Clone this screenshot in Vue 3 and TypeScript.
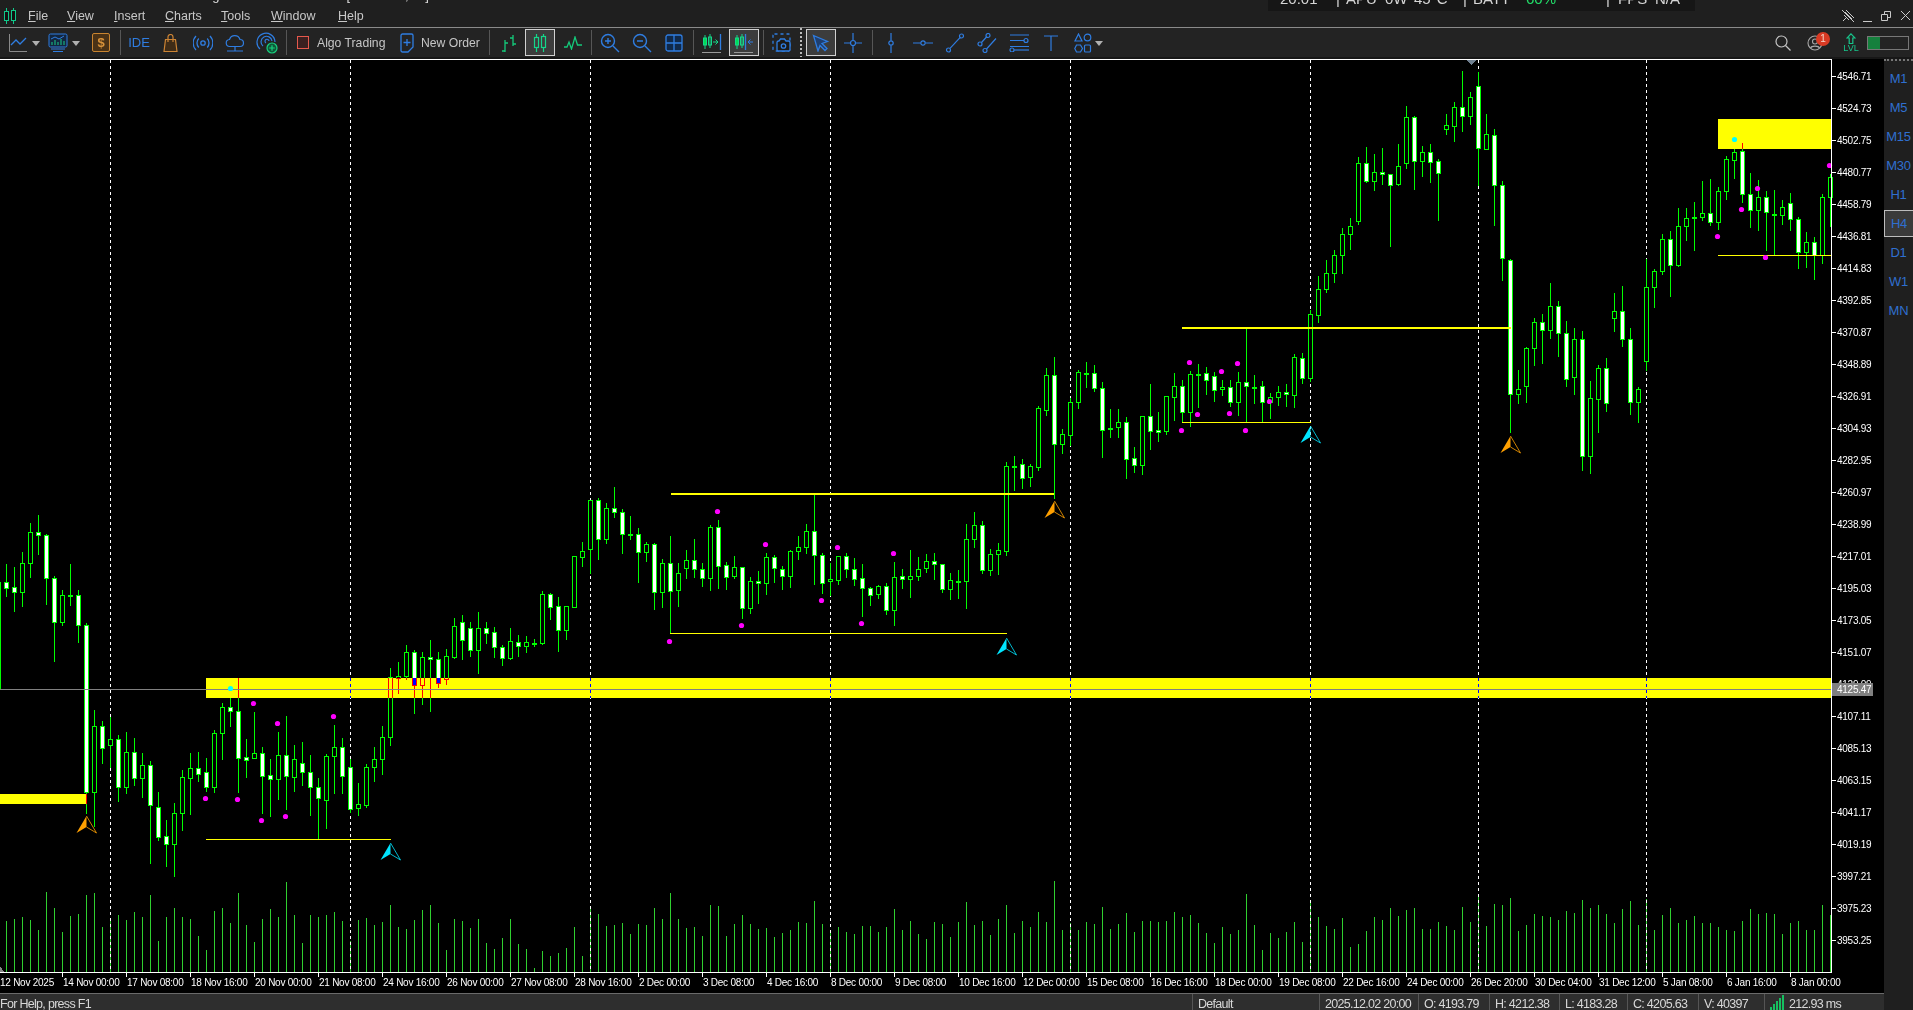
<template>
  <div class="terminal">
    <header class="titlebar">
      <div class="title-bits">
        <span class="tb-a">Trading</span><span class="tb-b">[GOLDm#,H4]</span>
      </div>
      <div class="menubar">
        <svg class="app-logo" width="14" height="18" viewBox="0 0 14 18">
          <path d="M3.5 1v16M10.5 1v16" stroke="#10c98a" fill="none" />
          <rect x="1.5" y="4.5" width="4" height="9" fill="#111" stroke="#10c98a" />
          <rect x="8.5" y="3.5" width="4" height="10" fill="#111" stroke="#10c98a" />
        </svg>
        <nav class="menu">
          <span class="m-file"><u>F</u>ile</span>
          <span class="m-view"><u>V</u>iew</span>
          <span class="m-insert"><u>I</u>nsert</span>
          <span class="m-charts"><u>C</u>harts</span>
          <span class="m-tools"><u>T</u>ools</span>
          <span class="m-window"><u>W</u>indow</span>
          <span class="m-help"><u>H</u>elp</span>
        </nav>
        <div class="winbtns">
          <svg width="14" height="14" viewBox="0 0 14 14" fill="none" stroke="#c9c9c9">
            <path d="M5 1l8 8M4 3l7 7M2 12l4-4M3 6l5 5M1 1l12 12" />
          </svg>
          <svg width="10" height="14" viewBox="0 0 10 14" fill="none" stroke="#c9c9c9">
            <path d="M0 12.5h9" />
          </svg>
          <svg width="11" height="14" viewBox="0 0 11 14" fill="none" stroke="#c9c9c9">
            <path d="M0.5 5.5h6v6h-6zM3.5 5V2.5h6v6H7" />
          </svg>
          <svg width="11" height="14" viewBox="0 0 11 14" fill="none" stroke="#c9c9c9">
            <path d="M1 2l9 9M10 2l-9 9" />
          </svg>
        </div>
      </div>
      <div class="hud">
        <span v-for="(h, i) in hud" :key="i" :class="{ good: h.good }" :style="{ width: h.w + 'px' }">{{ h.t }}</span>
      </div>
    </header>

    <div class="toolbar">
      <span class="slot i-line">
        <svg width="20" height="20" viewBox="0 0 20 20" fill="none">
          <path d="M1.5 1v17.5H19" stroke="#8a8a8a" />
          <path d="M3 12l5-5 4 4 6-6" stroke="#2f7de1" stroke-width="1.3" />
        </svg>
      </span>
      <span class="caret c-1"></span>
      <span class="slot i-monitor">
        <svg width="20" height="20" viewBox="0 0 20 20" fill="none" stroke="#2f7de1">
          <rect x="1" y="1" width="18" height="13" rx="1.5" fill="#13263f" />
          <path d="M4 12V9M7 12V7M10 12V9M13 12V6M16 12V8" stroke="#18c98a" />
          <path d="M3 6l4-2 4 2 5-3" />
          <path d="M3 16h14M5 18.5h10" />
        </svg>
      </span>
      <span class="caret c-2"></span>
      <span class="slot i-dollar"><span class="dollar">$</span></span>
      <span class="sep s-1"></span>

      <span class="slot w32 ide">IDE</span>
      <span class="slot w32">
        <svg width="18" height="18" viewBox="0 0 18 18" fill="none" stroke="#cc8434" stroke-width="1.2">
          <path d="M3.5 5.5h10l1.5 12H2z" fill="#3f2c17" />
          <path d="M6 8V3a2.5 2.5 0 0 1 5 0v5" />
        </svg>
      </span>
      <span class="slot w32">
        <svg width="20" height="16" viewBox="0 0 20 16" fill="none" stroke="#2f7de1" stroke-width="1.3">
          <circle cx="10" cy="8" r="2.2" />
          <path d="M5.8 3.5a6.5 6.5 0 0 0 0 9M14.2 3.5a6.5 6.5 0 0 1 0 9M3 1a10 10 0 0 0 0 14M17 1a10 10 0 0 1 0 14" />
        </svg>
      </span>
      <span class="slot w32">
        <svg width="20" height="20" viewBox="0 0 20 20" fill="none" stroke="#2f7de1" stroke-width="1.2">
          <path d="M5 13.5a3.5 3.5 0 0 1-.5-7A5.5 5.5 0 0 1 15 6.5a3.5 3.5 0 0 1 0 7z" />
          <path d="M10 13.5v4M2 18h16" />
        </svg>
      </span>
      <span class="slot w32">
        <svg width="22" height="22" viewBox="0 0 22 22" fill="none" stroke="#2f7de1" stroke-width="1.2">
          <path d="M4 17a9 9 0 1 1 15-7M7 14a5.5 5.5 0 1 1 9-5M10 11a2 2 0 1 1 3-2" />
          <circle cx="16" cy="16" r="5" fill="#0e5a3a" stroke="#19d07f" />
          <path d="M16 13.2v5.6M13.2 16h5.6" stroke="#19d07f" />
        </svg>
      </span>
      <span class="sep s-2"></span>

      <span class="algo-box"></span>
      <span class="tb-text algo">Algo Trading</span>
      <span class="order-ic">
        <svg width="14" height="20" viewBox="0 0 14 20" fill="none" stroke="#2f7de1" stroke-width="1.3">
          <path d="M2.5 1h9a1.5 1.5 0 0 1 1.5 1.5V14l-5 5H2.5A1.5 1.5 0 0 1 1 17.5v-15A1.5 1.5 0 0 1 2.5 1z" />
          <path d="M7 6v7M3.5 9.5h7" />
        </svg>
      </span>
      <span class="tb-text order">New Order</span>
      <span class="sep s-3"></span>

      <span class="slot w32 m3">
        <svg width="18" height="18" viewBox="0 0 18 18" fill="none" stroke="#14c97a" stroke-width="1.3">
          <path d="M5 6v12M2 17h3M5 9h3M13 1v11M10 4h3M13 10h3" />
        </svg>
      </span>
      <span class="slot active w30">
        <svg width="14" height="20" viewBox="0 0 14 20" fill="none" stroke="#14d78a" stroke-width="1.2">
          <path d="M3.5 1v18M10.5 1v18" />
          <rect x="1.5" y="4.5" width="4" height="10" fill="#3c3c3c" />
          <rect x="8.5" y="3.5" width="4" height="11" fill="#3c3c3c" />
        </svg>
      </span>
      <span class="slot w32 m2">
        <svg width="18" height="14" viewBox="0 0 18 14" fill="none" stroke="#14c97a" stroke-width="1.3">
          <path d="M0 11h3l2-5 2.5 7L11 1l2.5 8H18" />
        </svg>
      </span>
      <span class="sep s-4"></span>

      <span class="slot w32 m2">
        <svg width="20" height="20" viewBox="0 0 20 20" fill="none" stroke="#2f7de1" stroke-width="1.4">
          <circle cx="8" cy="8" r="6.5" />
          <path d="M8 5v6M5 8h6M13 13l6 6" />
        </svg>
      </span>
      <span class="slot w32">
        <svg width="20" height="20" viewBox="0 0 20 20" fill="none" stroke="#2f7de1" stroke-width="1.4">
          <circle cx="8" cy="8" r="6.5" />
          <path d="M5 8h6M13 13l6 6" />
        </svg>
      </span>
      <span class="slot w32">
        <svg width="18" height="18" viewBox="0 0 18 18" fill="#10294a" stroke="#2f7de1" stroke-width="1.3">
          <rect x="1" y="1" width="16" height="16" rx="2" />
          <path d="M9 1v16M1 9h16" />
        </svg>
      </span>
      <span class="sep s-5"></span>

      <span class="slot w32 m2">
        <svg width="20" height="20" viewBox="0 0 20 20" fill="none">
          <path d="M3 2v14M8 1v14" stroke="#14d78a" />
          <rect x="1.5" y="5" width="3" height="7" fill="#0d5" stroke="#14d78a" />
          <rect x="6.5" y="4" width="3" height="8" stroke="#14d78a" />
          <path d="M11 9h5M13.5 6.5L16 9l-2.5 2.5" stroke="#14d78a" />
          <path d="M18.5 1v16" stroke="#2f7de1" stroke-width="1.3" />
          <path d="M0 19.5h19" stroke="#9a9a9a" />
        </svg>
      </span>
      <span class="slot active w30 m1">
        <svg width="20" height="20" viewBox="0 0 20 20" fill="none">
          <path d="M3 2v14M8 1v14" stroke="#14d78a" />
          <rect x="1.5" y="5" width="3" height="7" fill="#0d5" stroke="#14d78a" />
          <rect x="6.5" y="4" width="3" height="8" stroke="#14d78a" />
          <path d="M11.5 1v16" stroke="#2f7de1" stroke-width="1.3" />
          <path d="M19 9h-5M16.5 6.5L14 9l2.5 2.5" stroke="#2f7de1" />
          <path d="M0 19.5h19" stroke="#9a9a9a" />
        </svg>
      </span>
      <span class="sep s-6"></span>

      <span class="slot w32 m2">
        <svg width="20" height="20" viewBox="0 0 20 20" fill="none" stroke="#2f7de1" stroke-width="1.3">
          <rect x="1" y="1" width="17" height="17" rx="1.5" stroke-dasharray="3 3" />
          <path d="M7 8l1.5-2h4L14 8h2.5a1.5 1.5 0 0 1 1.5 1.5v7a1.5 1.5 0 0 1-1.5 1.5h-10A1.5 1.5 0 0 1 5 16.5v-7A1.5 1.5 0 0 1 6.5 8z" fill="#1a1a1a" />
          <circle cx="11.5" cy="13" r="2.2" />
        </svg>
      </span>
      <span class="dots"></span>
      <span class="slot active w30 m4">
        <svg width="18" height="18" viewBox="0 0 18 18" fill="#1f3f70" stroke="#2f7de1" stroke-width="1.3">
          <path d="M1.5 1.5l14 6-5.5 2 5 5-2 2-5-5-2 5.5z" />
        </svg>
      </span>
      <span class="slot w32 m1">
        <svg width="18" height="20" viewBox="0 0 18 20" fill="none" stroke="#2f7de1" stroke-width="1.2">
          <path d="M9 0v7M9 13v7M0 10h6M12 10h6" />
          <circle cx="9" cy="10" r="2.5" />
        </svg>
      </span>
      <span class="sep s-7"></span>

      <span class="slot w32 m2">
        <svg width="8" height="20" viewBox="0 0 8 20" fill="none" stroke="#2f7de1" stroke-width="1.2">
          <path d="M4 0v7.500M4 12.500v7.500" />
          <circle cx="4" cy="10" r="2.200" />
        </svg>
      </span>
      <span class="slot w32">
        <svg width="20" height="8" viewBox="0 0 20 8" fill="none" stroke="#2f7de1" stroke-width="1.2">
          <path d="M0 4h7.500M12.500 4h7.500" />
          <circle cx="10" cy="4" r="2.200" />
        </svg>
      </span>
      <span class="slot w32">
        <svg width="20" height="20" viewBox="0 0 20 20" fill="none" stroke="#2f7de1" stroke-width="1.2">
          <circle cx="3.500" cy="17" r="2" />
          <circle cx="16.500" cy="3" r="2" />
          <path d="M5 15.300L15 4.700" />
        </svg>
      </span>
      <span class="slot w32">
        <svg width="20" height="20" viewBox="0 0 20 20" fill="none" stroke="#2f7de1" stroke-width="1.2">
          <circle cx="3" cy="11" r="2" />
          <circle cx="11" cy="2.500" r="2" />
          <circle cx="8" cy="17.500" r="2" />
          <path d="M4.500 9.500L9.500 4M9.500 16L19 5.500" />
        </svg>
      </span>
      <span class="slot w32">
        <svg width="20" height="18" viewBox="0 0 20 18" fill="none" stroke="#2f7de1" stroke-width="1.2">
          <path d="M1 1h19M1 6.500h14M1 12.500h19" />
          <circle cx="17" cy="6.500" r="2" />
          <circle cx="3" cy="16" r="2" />
          <path d="M5 16h15" />
        </svg>
      </span>
      <span class="slot w32">
        <svg width="14" height="16" viewBox="0 0 14 16" fill="none" stroke="#2f7de1" stroke-width="1.2">
          <path d="M0 1h14M7 1v15" />
        </svg>
      </span>
      <span class="slot i-shapes">
        <svg width="18" height="20" viewBox="0 0 18 20" fill="none" stroke="#2f7de1" stroke-width="1.2">
          <path d="M4.500 1L8 8H1z" />
          <circle cx="13.500" cy="4.500" r="3.300" />
          <path d="M2.500 12h4l2 3.500-2 3.500h-4L.800 15.500z" />
          <rect x="10.500" y="12" width="6" height="7" rx="1" />
        </svg>
      </span>
      <span class="caret c-3"></span>

      <div class="toolbar-right">
        <span class="slot w32">
          <svg width="16" height="16" viewBox="0 0 16 16" fill="none" stroke="#c4c4c4" stroke-width="1.2">
            <circle cx="6.500" cy="6.500" r="5.500" />
            <path d="M10.500 10.500l5 5" />
          </svg>
        </span>
        <span class="slot w32 user">
          <svg width="16" height="16" viewBox="0 0 16 16" fill="none" stroke="#a8a8a8" stroke-width="1.1">
            <circle cx="8" cy="8" r="7" />
            <circle cx="8" cy="6.500" r="2.500" />
            <path d="M3.500 13c1-2.500 8-2.500 9 0" />
          </svg>
          <b class="badge">1</b>
        </span>
        <span class="lvl">
          <svg width="10" height="11" viewBox="0 0 10 11" fill="none" stroke="#17c48a" stroke-width="1.2">
            <path d="M5 .8L9 5H6.800v5.500H3.200V5H1z" />
          </svg>
          <em>LVL</em>
        </span>
        <span class="gauge"><i></i></span>
      </div>
    </div>

    <div class="workspace">
      <div class="main-col">
        <svg class="chart" width="1884" height="934" viewBox="0 59 1884 934">
          <rect class="crisp" x="0" y="59" width="1884" height="934" fill="#000" />

          <rect v-for="v in volumes" :key="'v' + v.x" class="crisp" :x="v.x" :y="v.y" width="1" :height="972 - v.y" fill="#2fd02f" />
          <path class="crisp" d="M0 972V966L4 972Z" fill="#888" />

          <line v-for="x in gridX" :key="'g' + x" class="crisp" :x1="x + 0.5" :x2="x + 0.5" y1="60" y2="972" stroke="#fff" stroke-dasharray="3 3" />

          <g v-for="c in bars" :key="c.x">
            <rect class="crisp" :x="c.x" :y="c.hi" width="1" :height="c.lo - c.hi + 1" fill="#00ff00" />
            <rect class="crisp" :x="c.x - 2" :y="c.top" width="5" :height="c.bot - c.top + 1" fill="#00ff00" />
            <rect v-if="c.bot - c.top > 1" class="crisp" :x="c.x - 1" :y="c.top + 1" width="3" :height="c.bot - c.top - 1" :fill="c.white ? '#fff' : '#000'" />
          </g>

          <rect class="crisp band" x="206" y="678" width="1625" height="20" fill="#ffff00" />
          <rect class="crisp band" x="0" y="794" width="87" height="10" fill="#ffff00" />
          <rect class="crisp band" x="1718" y="119" width="113" height="30" fill="#ffff00" />

          <rect class="crisp" x="0" y="689" width="1831" height="1" fill="#808080" />

          <rect v-for="(l, i) in levels" :key="'l' + i" class="crisp" :x="l[0]" :y="l[1]" :width="l[2] - l[0]" :height="l[3]" fill="#ffff00" />

          <circle v-for="(d, i) in magenta" :key="'m' + i" :cx="d[0] + 0.5" :cy="d[1] + 0.5" r="2.600" fill="#ff00ff" />
          <circle cx="230.500" cy="688.500" r="2.600" fill="#00ffff" />
          <circle cx="1734.500" cy="139.500" r="2.600" fill="#00ffff" />

          <g v-for="(a, i) in arrows" :key="'a' + i" :transform="`translate(${a.x + 0.5} ${a.y})`">
            <path d="M0 0L-10 17L0 11Z" :fill="a.color" />
            <path d="M0 0L10 17L0 11" fill="none" :stroke="a.color" stroke-width="1" opacity="0.8" />
          </g>

          <path class="crisp" d="M1466 60H1476L1471 65Z" fill="#708090" />

          <rect class="crisp" x="0" y="59" width="1832" height="1" fill="#fff" />
          <rect class="crisp" x="1831" y="59" width="1" height="914" fill="#fff" />
          <rect class="crisp" x="0" y="972" width="1832" height="1" fill="#fff" />

          <g v-for="p in prices" :key="p.t">
            <rect class="crisp" x="1832" :y="p.y" width="4" height="1" fill="#fff" />
            <text class="axis" x="1837" :y="p.y + 4">{{ p.t }}</text>
          </g>
          <rect class="crisp" x="1832" y="683" width="41" height="13" fill="#808080" />
          <text class="axis" x="1837" y="693">4125.47</text>

          <g v-for="(t, i) in times" :key="t">
            <rect class="crisp" :x="62 + 64 * (i - 1)" y="972" width="1" height="5" fill="#fff" />
            <text class="axis" :x="i === 0 ? 0 : 63 + 64 * (i - 1)" y="986">{{ t }}</text>
          </g>
        </svg>

        <footer class="statusbar">
          <span v-for="(s, i) in statusCells" :key="i" class="cell" :style="{ width: s.w + 'px' }">{{ s.t }}</span>
          <span class="cell ping">
            <svg width="14" height="16" viewBox="0 0 14 16" fill="#16c060">
              <rect x="0" y="13" width="2" height="3" />
              <rect x="3" y="10" width="2" height="6" />
              <rect x="6" y="7" width="2" height="9" />
              <rect x="9" y="4" width="2" height="12" />
              <rect x="12" y="1" width="2" height="15" />
            </svg>
            212.93 ms
          </span>
        </footer>
      </div>

      <aside class="timeframes">
        <span v-for="tf in frames" :key="tf" class="tf" :class="{ on: tf === 'H4' }">{{ tf }}</span>
      </aside>
    </div>
  </div>
</template>

<script setup lang="ts">
import { computed } from "vue";

// hi, body top, body bottom, lo, white body - in page pixels, one entry per H4 bar, first bar sits at x = -2
const raw: number[][] = [
  [582,582,688,688,0],[564,582,588,596,1],[567,587,592,611,1],[552,563,592,606,0],[523,532,563,577,0],[515,532,535,554,1],[534,535,578,604,1],[576,578,622,661,1],
  [590,595,622,625,0],[564,595,596,605,0],[590,595,625,642,1],[623,625,792,813,1],[710,726,792,826,0],[721,726,748,763,1],[717,739,745,767,0],[735,739,787,801,1],
  [732,752,787,793,0],[738,752,778,785,1],[753,765,778,797,0],[761,765,805,863,1],[792,807,837,840,1],[820,836,844,866,1],[803,813,844,876,0],[770,777,813,830,0],
  [753,768,778,814,0],[752,768,774,781,1],[758,772,787,791,1],[730,733,787,792,0],[703,707,733,759,0],[698,707,711,726,1],[678,711,758,792,1],[739,757,760,777,1],
  [712,753,758,758,0],[747,753,776,813,1],[759,775,779,816,1],[732,755,779,799,0],[716,755,776,809,1],[745,759,777,791,0],[742,763,772,785,1],[755,772,787,815,1],
  [778,787,798,839,1],[754,756,800,828,0],[725,747,756,793,0],[738,747,776,793,1],[759,767,809,812,1],[783,804,808,815,0],[764,767,805,807,0],[747,759,767,781,0],
  [726,737,759,774,0],[668,677,737,745,0],[662,676,678,693,0],[645,652,676,679,0],[650,652,685,713,1],[652,657,685,704,0],[640,657,659,711,1],[652,659,683,687,1],
  [649,656,679,684,0],[618,626,657,658,0],[615,622,640,659,1],[622,628,650,656,1],[612,628,650,673,0],[622,628,633,643,1],[627,632,647,657,1],[645,647,658,665,1],
  [628,641,658,659,0],[635,642,646,656,1],[636,642,646,652,0],[639,643,644,646,0],[591,594,643,644,0],[593,594,607,619,1],[597,606,630,651,1],[606,606,630,639,0],
  [556,556,607,607,0],[542,551,557,566,0],[500,500,549,573,0],[498,500,539,559,1],[503,508,539,543,0],[487,508,512,517,1],[509,512,534,553,1],[516,534,535,539,0],
  [528,534,552,582,1],[542,544,552,561,0],[543,544,592,609,1],[559,563,592,607,0],[536,563,591,633,1],[563,573,590,606,0],[550,560,568,578,0],[539,560,569,577,1],
  [563,569,578,586,1],[525,527,578,590,0],[520,527,566,588,1],[562,565,577,589,1],[556,567,576,578,0],[567,567,608,618,1],[577,581,608,613,0],[571,581,583,603,1],
  [553,557,583,594,0],[555,557,568,582,1],[566,569,576,589,1],[550,551,576,587,0],[536,547,551,559,0],[524,531,547,553,0],[495,531,555,584,1],[553,555,583,593,1],
  [563,579,581,595,0],[556,556,580,584,0],[553,556,569,577,1],[558,569,579,585,1],[564,578,588,616,1],[587,588,595,605,1],[585,586,594,598,0],[583,586,610,614,1],
  [562,577,610,625,0],[569,576,579,588,1],[550,576,579,597,0],[557,569,576,580,0],[554,561,568,572,0],[553,561,564,579,1],[564,564,589,592,1],[573,580,589,599,0],
  [570,581,582,598,0],[524,539,581,608,0],[512,525,539,547,0],[521,525,570,573,1],[549,554,570,575,0],[543,550,554,574,0],[462,466,551,555,0],[456,466,467,490,0],
  [459,464,478,488,1],[464,466,477,486,0],[406,408,467,470,0],[368,375,410,415,0],[357,375,444,498,1],[429,434,444,453,0],[398,402,435,445,0],[370,372,402,408,0],
  [362,373,374,387,0],[365,373,388,391,1],[382,388,430,457,1],[409,428,429,437,0],[409,422,427,437,0],[417,422,459,478,1],[447,458,465,472,1],[416,416,465,474,0],
  [384,416,431,449,1],[412,430,432,441,1],[396,396,431,434,0],[373,386,397,420,0],[380,386,412,422,1],[371,374,412,426,0],[364,374,375,407,0],[367,373,380,394,1],
  [372,376,390,401,1],[380,387,389,395,0],[380,387,402,406,1],[372,382,402,415,0],[327,382,386,422,1],[375,387,388,403,0],[381,386,402,422,1],[393,397,402,418,0],
  [386,392,397,405,0],[384,392,394,406,1],[354,357,395,407,0],[353,358,378,383,1],[310,314,378,381,0],[276,289,315,322,0],[260,273,289,292,0],[250,255,273,282,0],
  [228,234,255,273,0],[218,226,234,249,0],[157,163,221,224,0],[147,163,181,182,1],[154,172,181,190,0],[148,172,174,184,1],[174,174,185,246,1],[144,166,184,185,0],
  [106,117,163,168,0],[116,117,161,189,1],[146,152,161,176,0],[144,152,162,182,1],[159,161,173,220,1],[114,125,129,134,0],[102,107,126,141,0],[71,107,116,131,1],
  [92,97,116,124,0],[72,86,148,185,1],[114,134,149,149,0],[129,135,185,225,1],[181,185,258,280,1],[259,260,394,432,1],[370,389,394,403,0],[347,348,386,402,0],
  [318,322,348,365,0],[314,322,330,363,1],[283,306,330,338,0],[301,306,333,356,1],[321,333,379,386,1],[328,339,377,394,0],[331,339,456,470,1],[381,398,456,473,0],
  [365,368,399,432,0],[358,368,403,411,1],[293,311,318,331,0],[286,311,339,346,1],[328,339,402,414,1],[387,389,402,422,0],[259,287,361,370,0],[269,271,287,307,0],
  [234,239,271,274,0],[231,239,265,296,1],[208,226,265,266,0],[208,218,226,240,0],[202,217,218,250,0],[181,213,217,220,0],[179,213,222,225,1],[187,191,222,229,0],
  [156,159,191,199,0],[149,152,160,178,0],[143,151,194,202,1],[173,194,210,227,1],[180,197,210,230,0],[191,197,212,250,1],[190,214,215,255,0],[200,207,215,224,0],
  [193,203,219,230,1],[217,219,252,268,1],[232,242,252,267,0],[237,242,255,279,1],[194,197,255,263,0],[174,177,197,226,0],
];

const bars = computed(() =>
  raw.map((r, i) => ({
    x: -2 + 8 * i,
    hi: r[0],
    top: r[1],
    bot: r[2],
    lo: r[3],
    white: r[4] === 1,
  }))
);

// volume tops that could be read off the reference, everything else follows the bar range
const knownVol: Record<number, number> = {
  46: 892, 94: 893, 158: 941, 206: 950, 238: 893, 254: 942, 286: 882, 302: 943, 350: 941, 446: 950, 486: 943, 494: 949,
  518: 944, 526: 949, 534: 968, 542: 951, 550: 956, 558: 953, 566: 948, 582: 956, 1054: 881, 1214: 943, 1262: 950, 1302: 942, 1350: 947, 1358: 944,
};

const volumes = computed(() =>
  bars.value.map((b, i) => {
    const noise = (i * 37 + (i % 7) * 11) % 17;
    const h = 24 + Math.min((b.lo - b.hi) * 0.42, 44) + noise;
    return { x: b.x, y: knownVol[b.x] ?? Math.round(972 - h) };
  })
);

const gridX = [110, 350, 590, 830, 1070, 1310, 1478, 1646];

// x1, y, x2, height
const levels = [
  [206, 839, 391, 1],
  [671, 493, 1054, 2],
  [670, 633, 1007, 1],
  [1182, 422, 1311, 1],
  [1182, 327, 1511, 2],
  [1718, 255, 1831, 1],
];

const magenta = [
  [205, 798], [237, 799], [261, 820], [285, 816], [253, 703], [277, 723], [333, 716],
  [717, 511], [765, 544], [837, 547], [893, 553], [821, 600], [741, 625], [861, 623], [669, 641],
  [1189, 362], [1237, 363], [1221, 371], [1269, 401], [1197, 414], [1229, 413], [1181, 430], [1245, 430],
  [1717, 236], [1741, 209], [1757, 188], [1765, 257], [1829, 165],
];

const arrows = [
  { x: 390, y: 843, color: "#00e5ff" },
  { x: 1006, y: 638, color: "#00e5ff" },
  { x: 1310, y: 426, color: "#00e5ff" },
  { x: 86, y: 816, color: "#ffa000" },
  { x: 1054, y: 501, color: "#ffa000" },
  { x: 1510, y: 436, color: "#ffa000" },
];

const priceLabels = [
  "4546.71", "4524.73", "4502.75", "4480.77", "4458.79", "4436.81", "4414.83", "4392.85", "4370.87", "4348.89",
  "4326.91", "4304.93", "4282.95", "4260.97", "4238.99", "4217.01", "4195.03", "4173.05", "4151.07", "4129.09",
  "4107.11", "4085.13", "4063.15", "4041.17", "4019.19", "3997.21", "3975.23", "3953.25",
];
const prices = priceLabels.map((t, i) => ({ t, y: 76 + 32 * i }));

const times = [
  "12 Nov 2025", "14 Nov 00:00", "17 Nov 08:00", "18 Nov 16:00", "20 Nov 00:00", "21 Nov 08:00", "24 Nov 16:00", "26 Nov 00:00",
  "27 Nov 08:00", "28 Nov 16:00", "2 Dec 00:00", "3 Dec 08:00", "4 Dec 16:00", "8 Dec 00:00", "9 Dec 08:00", "10 Dec 16:00",
  "12 Dec 00:00", "15 Dec 08:00", "16 Dec 16:00", "18 Dec 00:00", "19 Dec 08:00", "22 Dec 16:00", "24 Dec 00:00", "26 Dec 20:00",
  "30 Dec 04:00", "31 Dec 12:00", "5 Jan 08:00", "6 Jan 16:00", "8 Jan 00:00",
];

const frames = ["M1", "M5", "M15", "M30", "H1", "H4", "D1", "W1", "MN"];

const hud = [
  { t: "20:01", w: 56 },
  { t: "|", w: 10 },
  { t: "APU", w: 39 },
  { t: "0W", w: 29 },
  { t: "45°C", w: 49 },
  { t: "|", w: 10 },
  { t: "BATT", w: 53 },
  { t: "60%", w: 80, good: true },
  { t: "|", w: 12 },
  { t: "FPS", w: 37 },
  { t: "N/A", w: 40 },
];

const statusCells = [
  { t: "For Help, press F1", w: 1192 },
  { t: "Default", w: 127 },
  { t: "2025.12.02 20:00", w: 99 },
  { t: "O: 4193.79", w: 71 },
  { t: "H: 4212.38", w: 70 },
  { t: "L: 4183.28", w: 68 },
  { t: "C: 4205.63", w: 71 },
  { t: "V: 40397", w: 66 },
];
</script>

<style scoped>
.terminal {
  width: 1913px;
  height: 1010px;
  overflow: hidden;
  position: relative;
  background: #1f1f1f;
  font-family: "Liberation Sans", Arial, sans-serif;
  color: #c8c8c8;
}

.titlebar {
  height: 27px;
  background: #1f1f1f;
  border-bottom: 1px solid #8a8a8a;
}
.title-bits {
  height: 3px;
  overflow: hidden;
  display: flex;
  font-size: 13px;
  line-height: 13px;
  color: #ddd;
}
.tb-a {
  margin: -11px 0 0 176px;
}
.tb-b {
  margin: -11px 0 0 127px;
}
.menubar {
  height: 22px;
  padding-top: 2px;
  display: flex;
  align-items: center;
}
.app-logo {
  margin-left: 3px;
  flex: none;
}
.menu {
  display: flex;
  font-size: 12.500px;
}
.menu span {
  flex: none;
}
.menu u {
  text-underline-offset: 1px;
}
.m-file { margin-left: 11px; width: 39px; }
.m-view { width: 47px; }
.m-insert { width: 51px; }
.m-charts { width: 56px; }
.m-tools { width: 50px; }
.m-window { width: 67px; }
.m-help { width: 40px; }
.winbtns {
  margin-left: auto;
  display: flex;
  align-items: center;
  gap: 8px;
  padding-right: 2px;
}

.hud {
  position: absolute;
  left: 1268px;
  top: 0;
  width: 427px;
  height: 11px;
  padding-left: 12px;
  box-sizing: border-box;
  background: #161616;
  display: flex;
  overflow: hidden;
  font-size: 15px;
  line-height: 15px;
  color: #d6d6d6;
}
.hud span {
  margin-top: -9px;
  flex: none;
}
.hud .good {
  color: #22e06a;
}

.toolbar {
  height: 29px;
  background: #232323;
  display: flex;
  align-items: center;
  padding-left: 5px;
  border-bottom: 2px solid #171717;
  box-sizing: content-box;
}
.slot {
  height: 27px;
  flex: none;
  display: flex;
  align-items: center;
  justify-content: center;
  box-sizing: border-box;
}
.w32 { width: 32px; }
.w30 { width: 30px; }
.m1 { margin-left: 1px; }
.m2 { margin-left: 2px; }
.m3 { margin-left: 3px; }
.m4 { margin-left: 4px; }
.active {
  background: #3c3c3c;
  border: 1px solid #d0d0d0;
}
.i-line { width: 25px; }
.i-monitor { width: 24px; margin-left: 5px; }
.i-dollar { width: 24px; margin-left: 7px; }
.i-shapes { width: 24px; margin-left: 4px; }
.caret {
  flex: none;
  width: 0;
  height: 0;
  border-left: 4px solid transparent;
  border-right: 4px solid transparent;
  border-top: 5px solid #b0b0b0;
}
.c-1 { margin: 2px 1px 0 2px; }
.c-2 { margin: 2px 2px 0 2px; }
.c-3 { margin: 2px 0 0 0; }
.dollar {
  width: 16px;
  height: 17px;
  border: 1px solid #c9842f;
  border-radius: 2px;
  background: #4a3216;
  color: #d8923a;
  font-size: 13px;
  font-weight: bold;
  line-height: 17px;
  text-align: center;
}
.sep {
  width: 1px;
  height: 25px;
  background: #565656;
  flex: none;
}
.s-1 { margin: 0 2px 0 7px; }
.s-2 { margin-left: 3px; }
.s-3 { margin-left: 11px; }
.s-4 { margin-left: 2px; }
.s-5 { margin-left: 3px; }
.s-6 { margin-left: 4px; }
.s-7 { margin-left: 3px; }
.dots {
  flex: none;
  width: 2px;
  height: 29px;
  margin-left: 2px;
  background: repeating-linear-gradient(to bottom, #bbb 0 2px, transparent 2px 4px);
}
.ide {
  color: #2f7de1;
  font-size: 13px;
}
.algo-box {
  flex: none;
  width: 10px;
  height: 11px;
  margin-left: 10px;
  border: 1px solid #e5584c;
  background: #3a2020;
}
.tb-text {
  flex: none;
  font-size: 12.200px;
  white-space: nowrap;
  color: #c6c6c6;
}
.algo {
  margin-left: 8px;
  width: 67px;
}
.order-ic {
  flex: none;
  margin-left: 16px;
  width: 14px;
  display: flex;
}
.order {
  margin-left: 7px;
  width: 57px;
}
.toolbar-right {
  margin-left: auto;
  display: flex;
  align-items: center;
  padding-right: 4px;
}
.user {
  position: relative;
}
.badge {
  position: absolute;
  left: 17px;
  top: 3px;
  width: 14px;
  height: 14px;
  border-radius: 50%;
  background: #d93a24;
  color: #f5d5c8;
  font-size: 10px;
  font-weight: normal;
  line-height: 14px;
  text-align: center;
}
.lvl {
  width: 24px;
  margin-left: 8px;
  display: flex;
  flex-direction: column;
  align-items: center;
  line-height: 9px;
}
.lvl em {
  font-style: normal;
  font-size: 9px;
  color: #17c48a;
}
.gauge {
  width: 42px;
  height: 14px;
  margin-left: 4px;
  border: 1px solid #777;
  box-sizing: border-box;
  display: flex;
}
.gauge i {
  width: 12px;
  background: #15803d;
}

.workspace {
  display: flex;
  height: 951px;
}
.main-col {
  width: 1884px;
  flex: none;
  display: flex;
  flex-direction: column;
}
.chart {
  display: block;
  flex: none;
}
.crisp {
  shape-rendering: crispEdges;
}
.band {
  mix-blend-mode: difference;
}
.axis {
  font-family: "Liberation Sans", Arial, sans-serif;
  font-size: 10px;
  letter-spacing: -0.25px;
  fill: #fff;
}

.statusbar {
  height: 16px;
  flex: none;
  display: flex;
  background: #2e2e2e;
  border-top: 1px solid #6a6a6a;
  font-size: 12.500px;
  letter-spacing: -0.7px;
  color: #d8d8d8;
  line-height: 21px;
}
.cell {
  flex: none;
  box-sizing: border-box;
  padding-left: 5px;
  border-left: 1px solid #555;
  white-space: nowrap;
  overflow: hidden;
}
.cell:first-child {
  border-left: 0;
  padding-left: 0;
}
.ping {
  display: flex;
  align-items: flex-start;
  gap: 5px;
  flex: 1;
}

.timeframes {
  width: 29px;
  flex: none;
  display: flex;
  flex-direction: column;
  background: #1f1f1f;
  padding-top: 3px;
  border-top: 2px dotted #777;
  box-sizing: border-box;
}
.tf {
  height: 29px;
  flex: none;
  display: flex;
  align-items: center;
  justify-content: center;
  font-size: 13px;
  letter-spacing: -0.2px;
  color: #2f6fd0;
  box-sizing: border-box;
}
.tf.on {
  height: 27px;
  margin: 1px 0;
  background: #3a3a3a;
  border: 1px solid #bdbdbd;
  border-right: 0;
}
</style>

<style>
html,
body {
  margin: 0;
  background: #000;
}
</style>
